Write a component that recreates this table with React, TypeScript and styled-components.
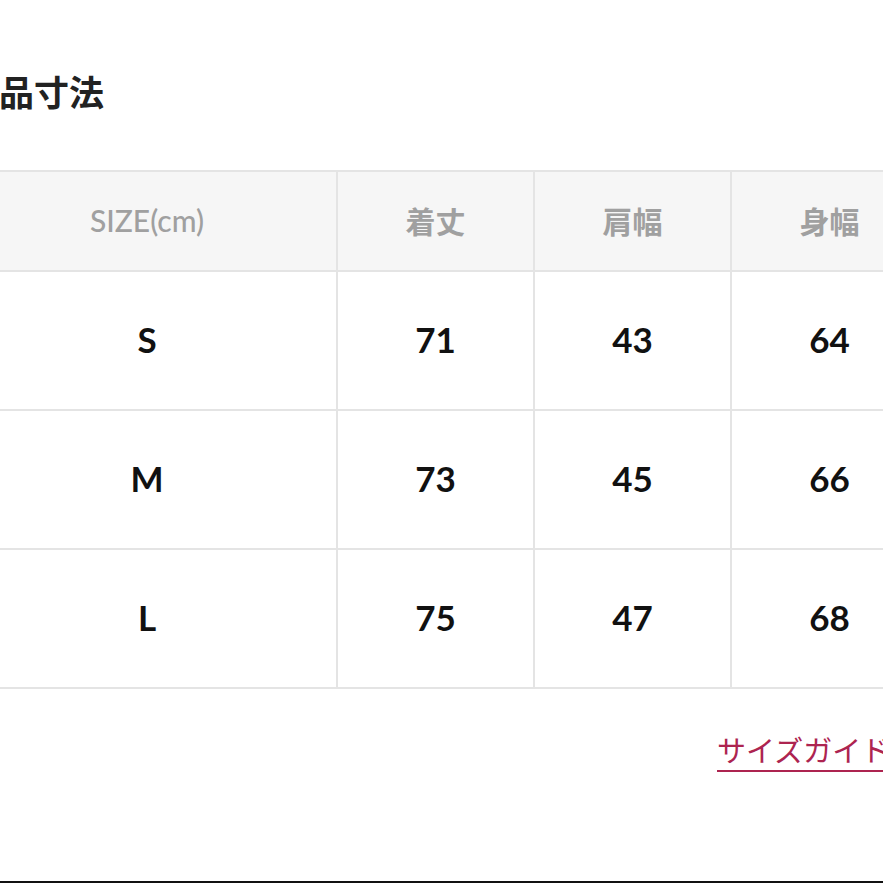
import React from 'react';
import styled, { createGlobalStyle } from 'styled-components';

const GlobalStyle = createGlobalStyle`
    html, body {
        margin: 0;
        padding: 0;
        background: #fff;
        overflow: hidden;
    }
    body {
        font-family: Lato, "Noto Sans CJK JP", sans-serif;
    }
`;

const Page = styled.div`
    width: 980px;
    margin-left: -44px;
    height: 883px;
    display: flex;
    flex-direction: column;
`;

const Title = styled.h2`
    margin: 69px 0 0 8px;
    font-family: "Noto Sans CJK JP", sans-serif;
    font-size: 35px;
    line-height: 43px;
    font-weight: 700;
    color: #222;
`;

const Grid = styled.div`
    margin-top: 58px;
    display: grid;
    grid-template-columns: 378px 195px 195px 195px;
    grid-template-rows: 98px 137px 137px 137px;
    gap: 2px;
    padding: 2px;
    background: #e4e4e4;
    width: max-content;
`;

const Cell = styled.div<{ $head?: boolean; $jp?: boolean }>`
    display: flex;
    align-items: center;
    justify-content: center;
    background: ${({ $head }) => ($head ? '#f6f6f6' : '#fff')};
    color: ${({ $head }) => ($head ? '#a0a0a0' : '#111')};
    font-family: ${({ $jp }) => ($jp ? '"Noto Sans CJK JP", sans-serif' : 'Lato, "Noto Sans CJK JP", sans-serif')};
    font-size: ${({ $head }) => ($head ? '30px' : '35px')};
    font-weight: ${({ $head, $jp }) => ($head ? ($jp ? 700 : 500) : 700)};
    padding-bottom: ${({ $head }) => ($head ? '3px' : '4px')};
`;

const LinkRow = styled.div`
    margin-top: 42px;
    padding-left: 761px;
`;

const GuideLink = styled.a`
    display: inline-block;
    font-family: "Noto Sans CJK JP", sans-serif;
    font-size: 29px;
    line-height: 36px;
    color: #ad2450;
    text-decoration: none;
    padding-bottom: 3px;
    border-bottom: 2px solid #ad2450;
    white-space: nowrap;
`;

const Footer = styled.div`
    margin-top: auto;
    height: 2px;
    background: #111;
`;

const heads = ['着丈', '肩幅', '身幅'];
const rows: [string, number, number, number][] = [
    ['S', 71, 43, 64],
    ['M', 73, 45, 66],
    ['L', 75, 47, 68],
];

export default function App(): JSX.Element {
    return (
        <>
            <GlobalStyle />
            <Page>
                <Title>商品寸法</Title>
                <Grid>
                    <Cell $head>SIZE(cm)</Cell>
                    {heads.map((h) => (
                        <Cell key={h} $head $jp>{h}</Cell>
                    ))}
                    {rows.map((r) =>
                        r.map((v, i) => <Cell key={r[0] + i}>{v}</Cell>)
                    )}
                </Grid>
                <LinkRow>
                    <GuideLink href="#">サイズガイド</GuideLink>
                </LinkRow>
                <Footer />
            </Page>
        </>
    );
}
